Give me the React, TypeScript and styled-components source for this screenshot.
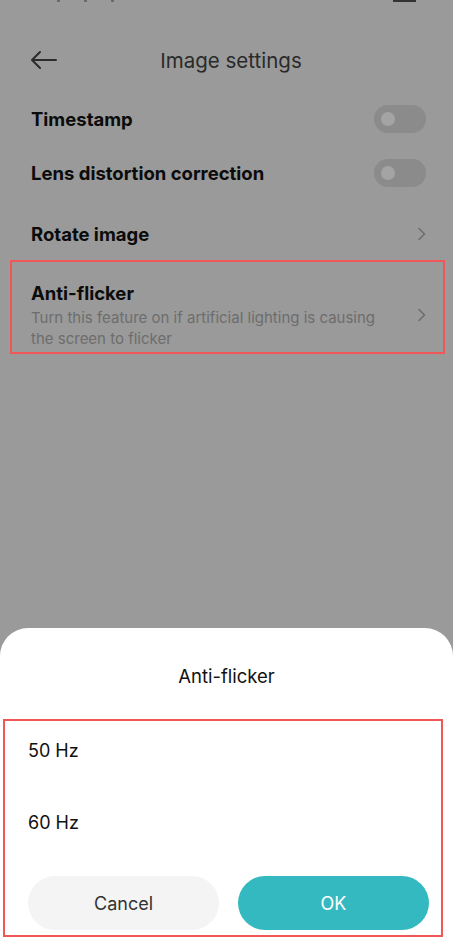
import styled, { createGlobalStyle, css } from 'styled-components';

const GlobalStyle = createGlobalStyle`
    html, body {
        margin: 0;
        padding: 0;
        background: #9a9a9a;
        font-family: Inter, Roboto, "Noto Sans", sans-serif;
    }
`;

const Screen = styled.div`
    position: relative;
    width: 453px;
    height: 942px;
    overflow: hidden;
    background: #9a9a9a;
    display: flex;
    flex-direction: column;
`;

const StatusBar = styled.div`
    height: 32px;
    display: flex;
    align-items: flex-start;
    padding: 0 37px 0 57px;
    gap: 24px;
`;

const StatusDot = styled.span`
    width: 3px;
    height: 2px;
    background: #6a6a6a;
`;

const Battery = styled.span`
    margin-left: auto;
    width: 23px;
    height: 2px;
    background: #333;
`;

const Header = styled.div`
    height: 56px;
    display: flex;
    align-items: center;
    padding: 0 30px;
`;

const Title = styled.div`
    flex: 1;
    text-align: center;
    font-size: 20.5px;
    color: #2a2a2a;
    margin-right: 18px;
`;

const Row = styled.div<{ $highlight?: boolean; $top?: number }>`
    min-height: 54px;
    display: flex;
    align-items: center;
    padding: 0 27px 0 31px;
    margin-top: ${(p) => p.$top ?? 0}px;
    ${(p) =>
        p.$highlight &&
        css`
            margin: -1px 8px 0 10px;
            border: 2px solid #f25757;
            padding: 18px 17px 3px 19px;
            min-height: 0;
        `}
`;

const RowText = styled.div`
    flex: 1;
    display: flex;
    flex-direction: column;
`;

const RowLabel = styled.div`
    font-size: 18.5px;
    font-weight: 700;
    color: #0b0b0b;
    line-height: 26px;
`;

const RowHint = styled.div`
    font-size: 15px;
    color: #6d6d6d;
    line-height: 21px;
    margin-top: 1px;
    padding-right: 24px;
`;

const Toggle = styled.div`
    width: 52px;
    height: 28px;
    border-radius: 14px;
    background: #8b8b8b;
    display: flex;
    align-items: center;
    padding-left: 7px;
    box-sizing: border-box;
`;

const Knob = styled.span`
    width: 14px;
    height: 14px;
    border-radius: 50%;
    background: #a4a4a4;
`;

const Sheet = styled.div`
    position: absolute;
    left: 0;
    right: 0;
    bottom: 0;
    height: 314px;
    background: #fff;
    border-radius: 28px 28px 0 0;
    display: flex;
    flex-direction: column;
    padding-top: 36px;
    box-sizing: border-box;
`;

const SheetTitle = styled.div`
    text-align: center;
    font-size: 18.5px;
    line-height: 24px;
    color: #111;
`;

const Choices = styled.div`
    margin: 31px 10px 0 3px;
    border: 2px solid #f25757;
    padding: 0 12px 5px 23px;
    display: flex;
    flex-direction: column;
`;

const Option = styled.div`
    height: 58px;
    display: flex;
    align-items: center;
    font-size: 18px;
    color: #111;
    & + & {
        margin-top: 14px;
    }
`;

const Buttons = styled.div`
    display: flex;
    gap: 19px;
    margin-top: 25px;
`;

const Button = styled.div<{ $primary?: boolean }>`
    flex: 1;
    height: 54px;
    border-radius: 27px;
    display: flex;
    align-items: center;
    justify-content: center;
    font-size: 18px;
    background: ${(p) => (p.$primary ? '#35b9c0' : '#f4f4f4')};
    color: ${(p) => (p.$primary ? '#fff' : '#333')};
`;

const BackArrow = () => (
    <svg width="27" height="20" viewBox="0 0 27 20" fill="none" stroke="#2b2b2b" strokeWidth="2" strokeLinecap="round" strokeLinejoin="round">
        <path d="M26 10H2M10 2L2 10l8 8" />
    </svg>
);

const Chevron = () => (
    <svg width="10" height="14" viewBox="0 0 10 14" fill="none" stroke="#6c6c6c" strokeWidth="1.5" strokeLinecap="round" strokeLinejoin="round">
        <path d="M3 1.5L8.5 7 3 12.5" />
    </svg>
);

const Switch = () => (
    <Toggle>
        <Knob />
    </Toggle>
);

const App = () => {
    return (
        <>
            <GlobalStyle />
            <Screen>
                <StatusBar>
                    <StatusDot />
                    <StatusDot />
                    <StatusDot />
                    <Battery />
                </StatusBar>
                <Header>
                    <BackArrow />
                    <Title>Image settings</Title>
                </Header>
                <Row $top={4}>
                    <RowText><RowLabel>Timestamp</RowLabel></RowText>
                    <Switch />
                </Row>
                <Row>
                    <RowText><RowLabel>Lens distortion correction</RowLabel></RowText>
                    <Switch />
                </Row>
                <Row $top={7}>
                    <RowText><RowLabel>Rotate image</RowLabel></RowText>
                    <Chevron />
                </Row>
                <Row $highlight>
                    <RowText>
                        <RowLabel>Anti-flicker</RowLabel>
                        <RowHint>Turn this feature on if artificial lighting is causing the screen to flicker</RowHint>
                    </RowText>
                    <Chevron />
                </Row>
                <Sheet>
                    <SheetTitle>Anti-flicker</SheetTitle>
                    <Choices>
                        <Option>50 Hz</Option>
                        <Option>60 Hz</Option>
                        <Buttons>
                            <Button>Cancel</Button>
                            <Button $primary>OK</Button>
                        </Buttons>
                    </Choices>
                </Sheet>
            </Screen>
        </>
    );
};

export default App;
